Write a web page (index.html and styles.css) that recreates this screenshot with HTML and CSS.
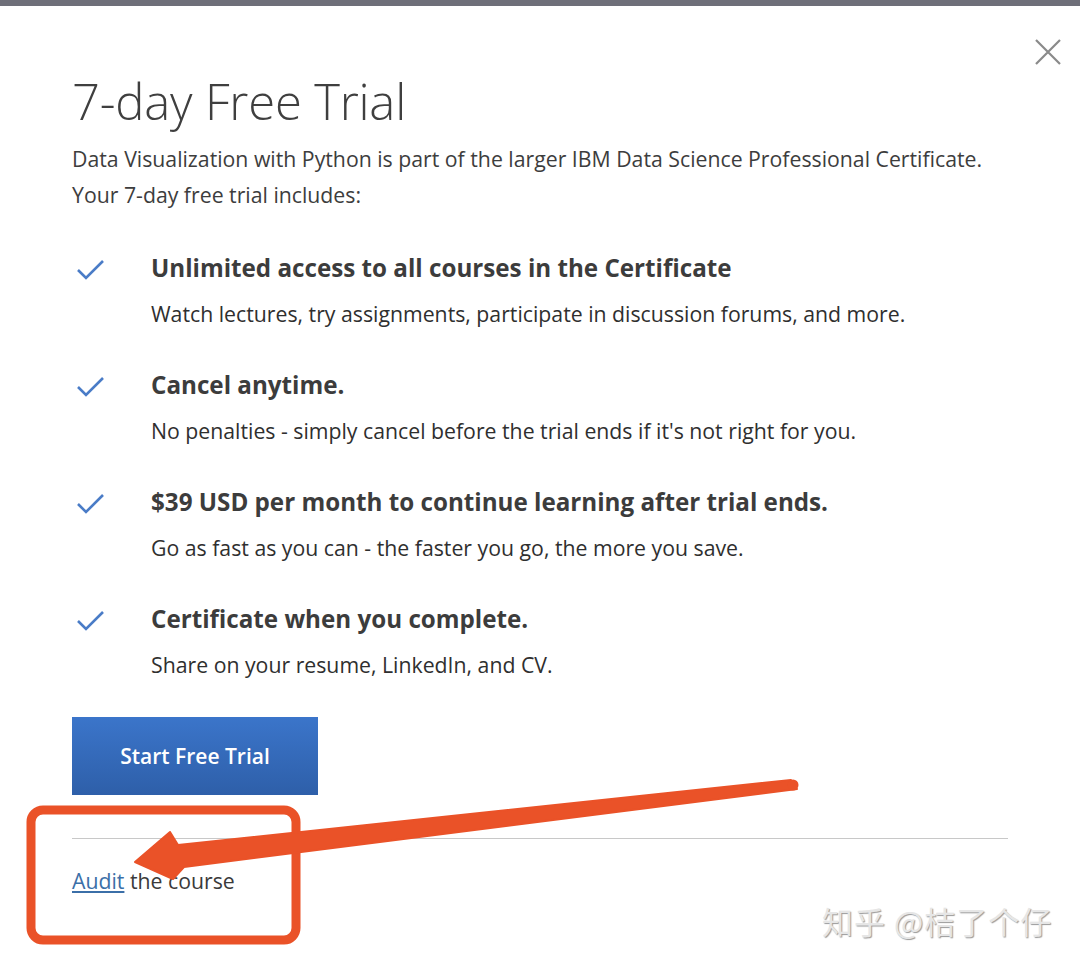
FILE: index.html
```html
<!DOCTYPE html>
<html>

<head>
    <title>7-day Free Trial</title>
    <link rel="stylesheet" href="styles.css">
</head>

<body>
    <div class="topBar"></div>

    <div class="modal">
        <button class="closeBtn" aria-label="Close">
            <svg width="28" height="28" viewBox="0 0 28 28">
                <path d="M2 2 L26 26 M26 2 L2 26" stroke="#8a8a8a" stroke-width="2.2" fill="none" />
            </svg>
        </button>

        <h1 class="title">7-day Free Trial</h1>
        <p class="intro">Data Visualization with Python is part of the larger IBM Data Science Professional Certificate.<br>
            Your 7-day free trial includes:</p>

        <ul class="perks">
            <li class="perk">
                <svg class="check" width="30" height="24" viewBox="0 0 30 24">
                    <path d="M2 12 L10 20 L27 3" stroke="#4a7cc7" stroke-width="2.6" fill="none" />
                </svg>
                <div>
                    <h3>Unlimited access to all courses in the Certificate</h3>
                    <p>Watch lectures, try assignments, participate in discussion forums, and more.</p>
                </div>
            </li>
            <li class="perk">
                <svg class="check" width="30" height="24" viewBox="0 0 30 24">
                    <path d="M2 12 L10 20 L27 3" stroke="#4a7cc7" stroke-width="2.6" fill="none" />
                </svg>
                <div>
                    <h3>Cancel anytime.</h3>
                    <p>No penalties - simply cancel before the trial ends if it's not right for you.</p>
                </div>
            </li>
            <li class="perk">
                <svg class="check" width="30" height="24" viewBox="0 0 30 24">
                    <path d="M2 12 L10 20 L27 3" stroke="#4a7cc7" stroke-width="2.6" fill="none" />
                </svg>
                <div>
                    <h3>$39 USD per month to continue learning after trial ends.</h3>
                    <p>Go as fast as you can - the faster you go, the more you save.</p>
                </div>
            </li>
            <li class="perk">
                <svg class="check" width="30" height="24" viewBox="0 0 30 24">
                    <path d="M2 12 L10 20 L27 3" stroke="#4a7cc7" stroke-width="2.6" fill="none" />
                </svg>
                <div>
                    <h3>Certificate when you complete.</h3>
                    <p>Share on your resume, LinkedIn, and CV.</p>
                </div>
            </li>
        </ul>

        <button class="startBtn">Start Free Trial</button>

        <hr class="divider">

        <p class="audit"><a href="#">Audit</a> the course</p>
    </div>

    <!-- Red annotation drawn over the screenshot -->
    <svg class="annotation" width="1080" height="966" viewBox="0 0 1080 966">
        <rect x="31" y="810" width="265" height="130" rx="12" ry="12" fill="none" stroke="#ea5228" stroke-width="9" />
        <polygon points="135,862 170,832 178,845 791,780 797,789 184,867 173,879" fill="#ea5228" stroke="#ea5228" stroke-width="2" stroke-linejoin="round" />
        <circle cx="793" cy="785" r="5.5" fill="#ea5228" />
    </svg>

    <div class="watermark">知乎 @桔了个仔</div>
</body>

</html>
```

FILE: styles.css
```css
body {
    margin: 0;
    background-color: #fff;
    font-family: 'Open Sans', 'Noto Sans', sans-serif;
    color: #3d3d3d;
    width: 1080px;
    height: 966px;
    overflow: hidden;
    position: relative;
}

.topBar {
    height: 6px;
    background-color: #6e6f79;
}

.modal {
    position: relative;
    padding: 62px 0 0 72px;
}

.closeBtn {
    position: absolute;
    top: 32px;
    right: 18px;
    border: none;
    background: none;
    padding: 0;
    cursor: pointer;
}

.title {
    margin: 0;
    font-weight: 300;
    font-size: 49px;
    line-height: 66px;
    color: #3f3f3f;
    letter-spacing: -0.2px;
}

.intro {
    margin: 7px 0 0;
    font-size: 21.25px;
    line-height: 36px;
    color: #3d3d3d;
}

.perks {
    list-style: none;
    margin: 39px 0 0;
    padding: 0;
}

.perk {
    display: flex;
    gap: 45px;
    margin-bottom: 41px;
}

.check {
    margin-top: 6px;
    margin-left: 4px;
    flex-shrink: 0;
}

.perk h3 {
    margin: 0;
    font-size: 24.2px;
    font-weight: 700;
    line-height: 32px;
    color: #3c3c3c;
}

.perk p {
    margin: 16px 0 0;
    font-size: 21.25px;
    line-height: 28px;
    color: #2f2f2f;
}

.startBtn {
    display: block;
    margin-top: -3px;
    width: 246px;
    height: 78px;
    border: none;
    color: #fff;
    font-family: 'Open Sans', sans-serif;
    font-size: 21px;
    font-weight: 600;
    background-image: linear-gradient(to bottom, #3b75ca, #2e5fa9);
    cursor: pointer;
}

.divider {
    margin: 43px 0 0;
    width: 936px;
    border: none;
    border-top: 1.5px solid #c8c8c8;
}

.audit {
    margin: 27px 0 0;
    font-size: 21.25px;
    line-height: 30px;
    color: #3a3a3a;
}

.audit a {
    color: #3b6fa8;
    text-decoration: underline;
}

.annotation {
    position: absolute;
    top: 0;
    left: 0;
    pointer-events: none;
}

.watermark {
    position: absolute;
    left: 822px;
    top: 898px;
    font-family: 'Noto Sans CJK SC', sans-serif;
    font-size: 31px;
    letter-spacing: 1px;
    color: #e6e6e6;
    text-shadow: 1px 1px 1px #9a9a9a;
}
```
